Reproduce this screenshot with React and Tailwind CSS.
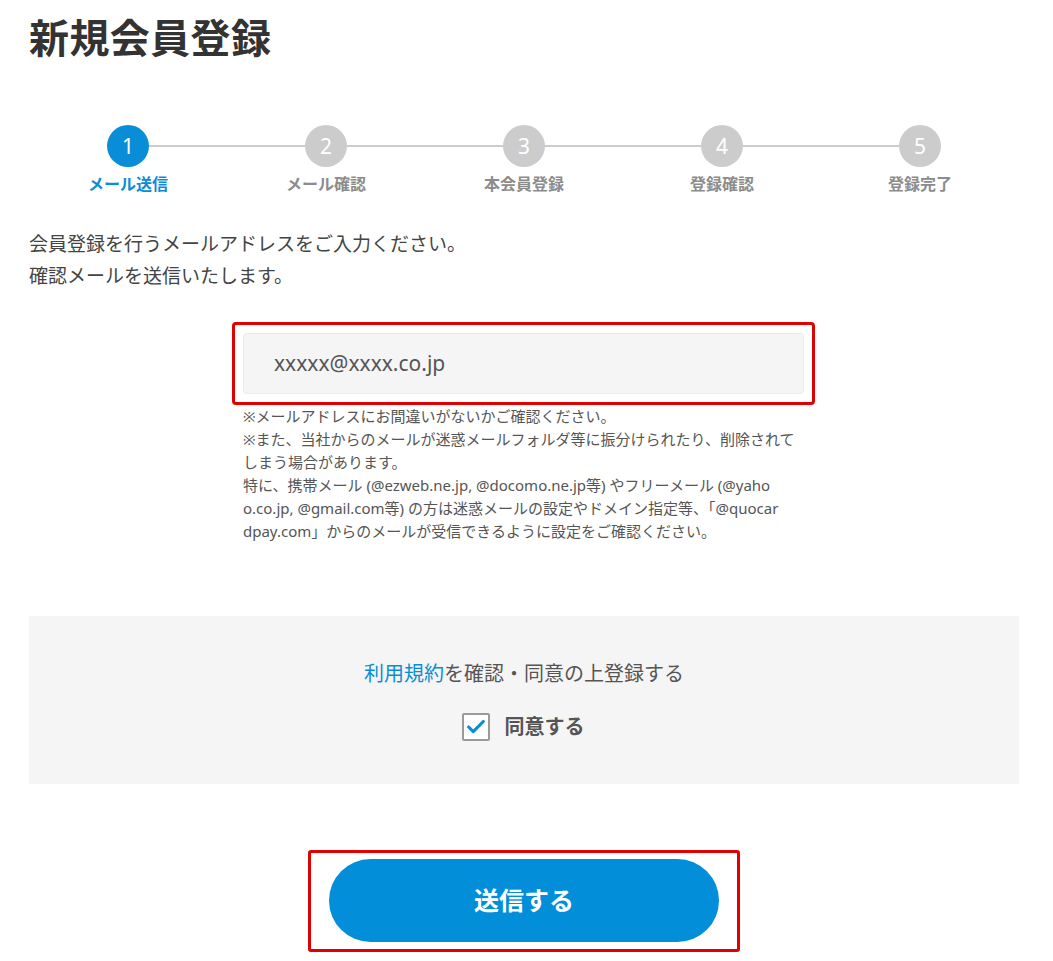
import { Check } from "lucide-react";

const steps = ["メール送信", "メール確認", "本会員登録", "登録確認", "登録完了"];

const font = { fontFamily: '"Noto Sans", "Noto Sans CJK JP", sans-serif' };

const notes = [
  "※メールアドレスにお間違いがないかご確認ください。",
  "※また、当社からのメールが迷惑メールフォルダ等に振分けられたり、削除されて",
  "しまう場合があります。",
  "特に、携帯メール (@ezweb.ne.jp, @docomo.ne.jp等) やフリーメール (@yaho",
  "o.co.jp, @gmail.com等) の方は迷惑メールの設定やドメイン指定等、「@quocar",
  "dpay.com」からのメールが受信できるように設定をご確認ください。",
];

export default function App() {
  return (
    <div className="bg-white min-h-screen text-[#333]" style={font}>
      <div className="w-[990px] ml-[29px] pt-[12px] pb-[8px]">
        <h1 className="text-[40px] font-bold leading-[52px] tracking-[0.4px]">新規会員登録</h1>

        {/* steps */}
        <ol className="grid grid-cols-5 mt-[61px]">
          {steps.map((label, i) => (
            <li key={label} className="relative flex flex-col items-center">
              {i < steps.length - 1 && (
                <span className="absolute top-[20px] left-1/2 w-full h-[2px] bg-[#cccccc]" />
              )}
              <span
                className={`relative z-10 w-[42px] h-[42px] rounded-full flex items-center justify-center text-white text-[21px] leading-none ${
                  i === 0 ? "bg-[#0a8dd7]" : "bg-[#cccccc]"
                }`}
              >
                {i + 1}
              </span>
              <span
                className={`mt-[7px] text-[16px] font-bold leading-[20px] ${
                  i === 0 ? "text-[#0a8dd7]" : "text-[#8c8c8c]"
                }`}
              >
                {label}
              </span>
            </li>
          ))}
        </ol>

        <p className="mt-[34px] text-[19px] leading-[32px] text-[#444]">
          会員登録を行うメールアドレスをご入力ください。
          <br />
          確認メールを送信いたします。
        </p>

        {/* email */}
        <div className="mt-[30px] ml-[203px] w-[583px]">
          <div className="border-[3px] border-[#e00000] rounded-[4px] p-[8px]">
            <div className="h-[61px] bg-[#f5f5f5] border border-[#ebebeb] rounded-[4px] flex items-center pl-[30px] text-[21px] text-[#555]">
              xxxxx@xxxx.co.jp
            </div>
          </div>
          <div className="pl-[11px] text-[15px] text-[#555]">
            {notes.map((line) => (
              <p key={line} className="h-[23px] leading-[23px] whitespace-nowrap">
                {line}
              </p>
            ))}
          </div>
        </div>

        {/* agreement */}
        <div className="mt-[73px] h-[168px] bg-[#f5f5f5] flex flex-col items-center pt-[44px]">
          <p className="text-[20px] leading-[28px] text-[#555]">
            <span className="text-[#0a8dd7]">利用規約</span>を確認・同意の上登録する
          </p>
          <label className="mt-[24px] flex items-center gap-[15px] -ml-[2px]">
            <span className="w-[28px] h-[28px] border-2 border-[#9a9a9a] bg-white rounded-[2px] flex items-center justify-center">
              <Check className="w-[22px] h-[22px] text-[#0a8dd7]" strokeWidth={3.4} />
            </span>
            <span className="text-[20px] font-bold text-[#555]">同意する</span>
          </label>
        </div>

        {/* submit */}
        <div className="mt-[66px] flex justify-center">
          <div className="border-[3px] border-[#e00000] rounded-[3px] px-[18px] pt-[6px] pb-[7px]">
            <button className="w-[390px] h-[83px] rounded-full bg-[#038ed9] text-white text-[25px] font-bold">
              送信する
            </button>
          </div>
        </div>
      </div>
    </div>
  );
}
